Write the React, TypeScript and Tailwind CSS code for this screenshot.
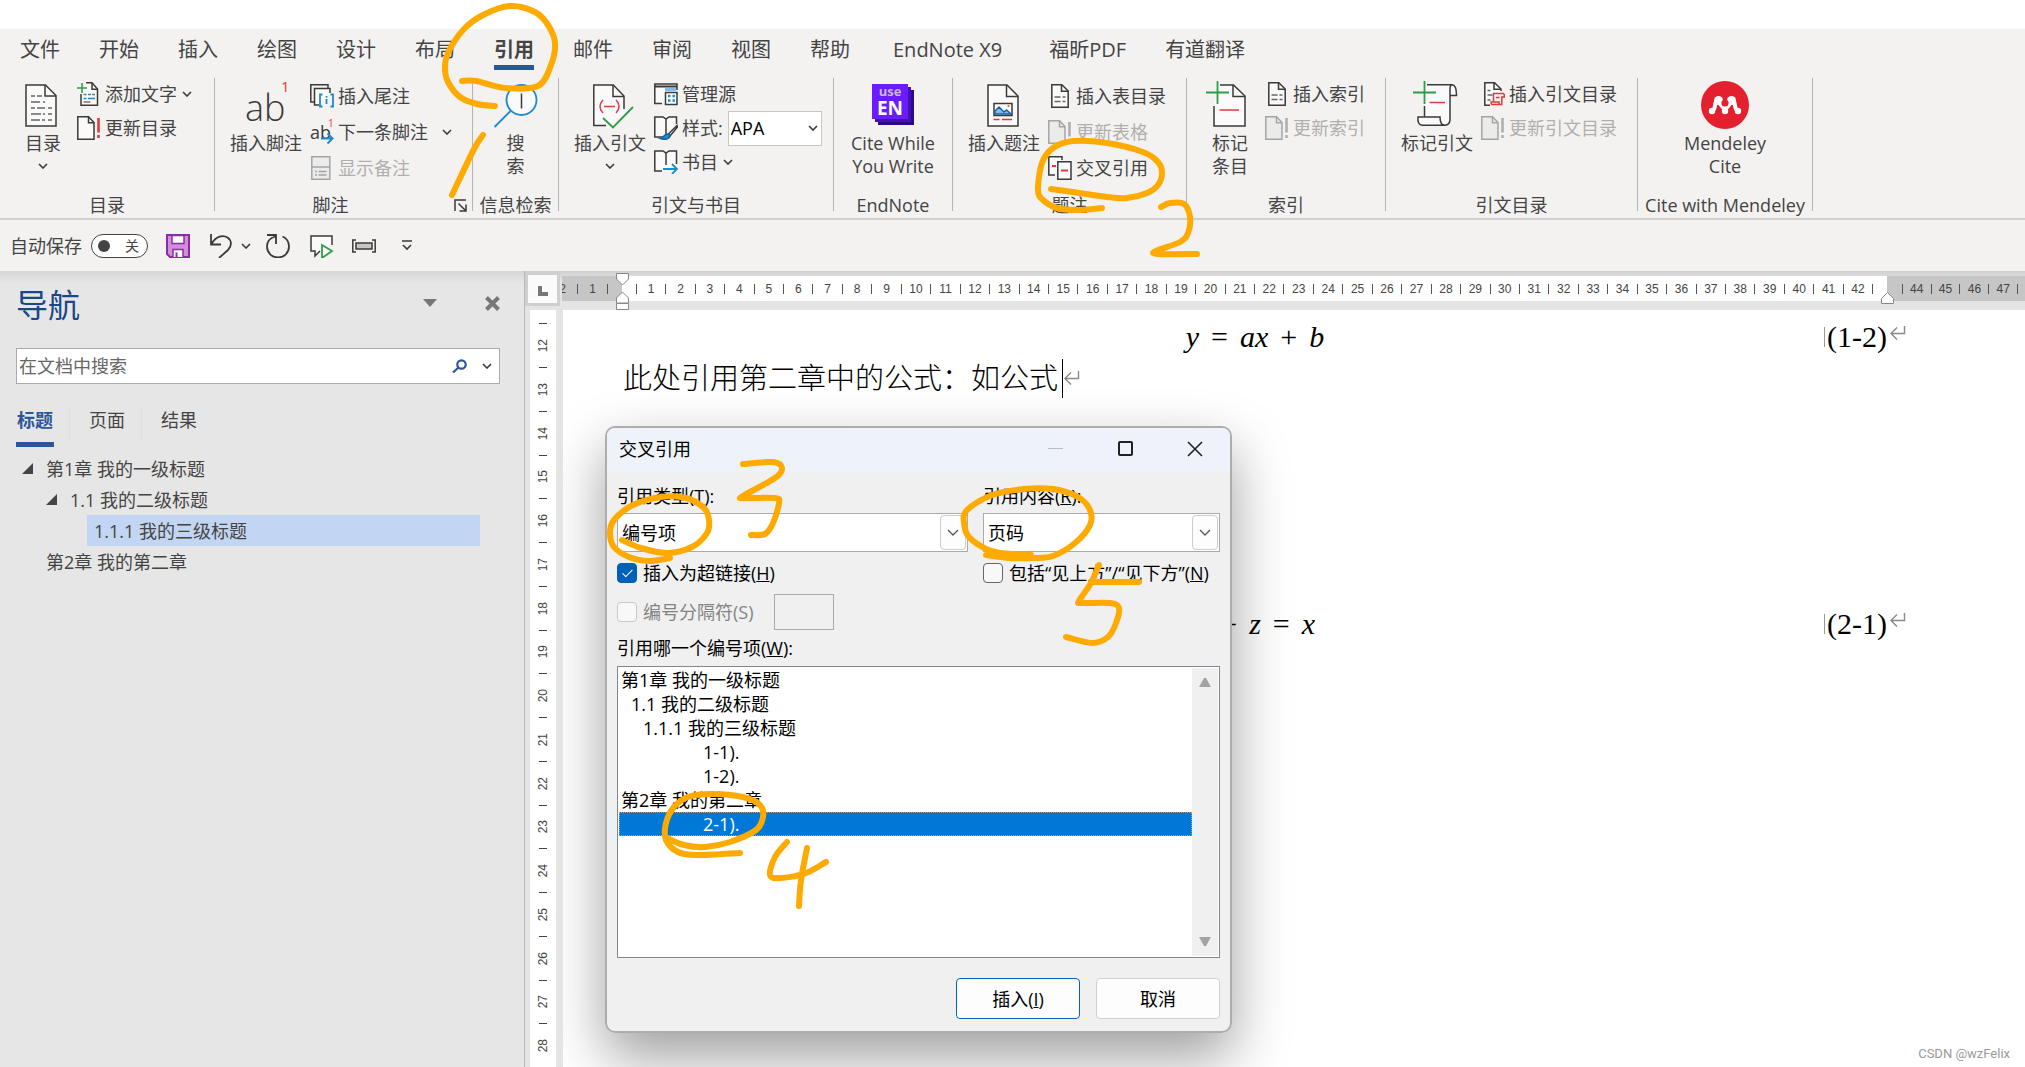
import { useState } from 'react';
import type { ReactNode } from 'react';

type Point = [number, number];

const tabs = ['文件', '开始', '插入', '绘图', '设计', '布局', '引用', '邮件', '审阅', '视图', '帮助', 'EndNote X9', '福昕PDF', '有道翻译'];

const numberedItems = [
  { text: '第1章 我的一级标题', indent: 'pl-0.5' },
  { text: '1.1 我的二级标题', indent: 'pl-3' },
  { text: '1.1.1 我的三级标题', indent: 'pl-6' },
  { text: '1-1).', indent: 'pl-[84px]' },
  { text: '1-2).', indent: 'pl-[84px]' },
  { text: '第2章 我的第二章', indent: 'pl-0.5' },
  { text: '2-1).', indent: 'pl-[84px]' },
];

// Handwritten marks: every stroke is a list of points joined by a smooth curve
const strokes: Point[][] = [
  // 1
  [[462, 81], [476, 81], [505, 88], [538, 86], [551, 65], [555, 43], [548, 25], [535, 12], [510, 6], [483, 15], [463, 30], [448, 53], [445, 68], [448, 82], [460, 97], [477, 104], [495, 106]],
  [[483, 135], [474, 149], [452, 195]],
  // 2
  [[1051, 189], [1073, 192], [1107, 197], [1127, 198], [1147, 193], [1158, 185], [1162, 173], [1158, 162], [1143, 152], [1107, 143], [1073, 141], [1053, 148], [1042, 163], [1038, 190], [1043, 200], [1057, 208], [1077, 210], [1102, 208]],
  [[1161, 207], [1170, 203], [1184, 204], [1190, 217], [1188, 233], [1180, 242], [1156, 251], [1158, 254], [1197, 254]],
  // 3
  [[622, 540], [641, 548], [667, 553], [692, 547], [707, 533], [709, 520], [704, 508], [686, 498], [661, 497], [633, 505], [614, 520], [610, 533], [614, 547], [629, 557], [649, 561], [670, 558]],
  [[743, 464], [773, 462], [782, 468], [775, 478], [743, 496], [745, 498], [775, 498], [779, 503], [773, 523], [765, 534], [751, 535]],
  // 4
  [[667, 838], [684, 845], [705, 847], [730, 842], [756, 830], [763, 817], [760, 805], [743, 797], [712, 794], [688, 797], [674, 807], [666, 823], [666, 840], [678, 852], [697, 855], [740, 853]],
  [[787, 842], [775, 857], [770, 875], [781, 878], [806, 873], [826, 862]],
  [[807, 848], [801, 880], [799, 906]],
  // 5
  [[986, 555], [1008, 558], [1033, 558], [1053, 556], [1075, 543], [1090, 525], [1090, 510], [1078, 497], [1053, 489], [1024, 489], [992, 495], [967, 510], [964, 523], [969, 537], [986, 549], [1000, 553], [1031, 555]],
  [[1099, 565], [1091, 583], [1079, 601], [1082, 603], [1110, 603], [1119, 608], [1116, 623], [1108, 637], [1092, 643], [1066, 637]],
  [[1091, 582], [1139, 582]],
];

const smooth = (pts: Point[]): string => {
  let d = `M${pts[0][0]} ${pts[0][1]}`;
  for (let i = 0; i < pts.length - 1; i++) {
    const p0 = pts[i - 1] || pts[i];
    const p1 = pts[i];
    const p2 = pts[i + 1];
    const p3 = pts[i + 2] || p2;
    d += ` C${p1[0] + (p2[0] - p0[0]) / 6} ${p1[1] + (p2[1] - p0[1]) / 6} ${p2[0] - (p3[0] - p1[0]) / 6} ${p2[1] - (p3[1] - p1[1]) / 6} ${p2[0]} ${p2[1]}`;
  }
  return d;
};

function Icon({ size = 24, children }: { size?: number; children: ReactNode }) {
  return (
    <svg width={size} height={size} viewBox={`0 0 ${size} ${size}`} fill="none" stroke="#3b3a39" strokeWidth={1.5} className="shrink-0" aria-hidden="true">
      {children}
    </svg>
  );
}

function Chevron() {
  return (
    <svg width="10" height="6" viewBox="0 0 10 6" fill="none" stroke="#3b3a39" strokeWidth="1.6" className="shrink-0" aria-hidden="true">
      <path d="M1 1l4 4 4-4" />
    </svg>
  );
}

function ReturnMark() {
  return (
    <svg width="17" height="15" viewBox="0 0 17 15" fill="none" stroke="#8a8a8a" strokeWidth="1.4" aria-hidden="true">
      <path d="M15.5 0v7.5H2M8 1.500 2 7.500l6 6" />
    </svg>
  );
}

/* ---------- ribbon pieces ---------- */

function Group({ label, width, launcher, children }: { label: string; width: string; launcher?: boolean; children: ReactNode }) {
  return (
    <section aria-label={label} className={`flex h-[133px] shrink-0 flex-col border-r border-[#b3b3b3] ${width}`}>
      <div className="-mt-px flex flex-1 items-start">{children}</div>
      <div className="flex h-3 items-center">
        <span className="flex-1 text-center leading-3 whitespace-nowrap">{label}</span>
        {launcher && (
          <button aria-label="脚注和尾注" className="mr-[5px] ml-2">
            <svg width="13" height="13" viewBox="0 0 13 13" fill="none" stroke="#3b3a39" strokeWidth="1.5">
              <path d="M1 12V1h11M4.500 4.500l7 7M12 5.500V12H5.500" />
            </svg>
          </button>
        )}
      </div>
    </section>
  );
}

function BigButton({ icon, lines, menu, className = '' }: { icon: ReactNode; lines: string[]; menu?: boolean; className?: string }) {
  return (
    <button className={`flex flex-col items-center pt-1 ${className}`}>
      {icon}
      <span className="mt-[3px] flex flex-col leading-[23px] whitespace-nowrap">
        {lines.map((line) => (
          <span key={line}>{line}</span>
        ))}
      </span>
      {menu && <span className="mt-2"><Chevron /></span>}
    </button>
  );
}

function SmallButton({ icon, label, menu, disabled, tall }: { icon: ReactNode; label: string; menu?: string; disabled?: boolean; tall?: boolean }) {
  return (
    <button disabled={disabled} className={`flex items-center gap-1 whitespace-nowrap ${tall ? 'h-9' : 'h-[34px]'} ${disabled ? 'text-[#b1afad]' : ''}`}>
      {icon}
      {label}
      {menu && <span className={menu}><Chevron /></span>}
    </button>
  );
}

const updateIcon = (disabled?: boolean) => (
  <Icon>
    <path d="M.8.8h10.700L17 6.500v16.700H.8z" fill={disabled ? '#ebebeb' : '#fafafa'} stroke={disabled ? '#a5a5a5' : '#3b3a39'} />
    <path d="M11.500.8v6H17" stroke={disabled ? '#a5a5a5' : '#3b3a39'} />
    <path d="M21.500 2v14.500M21.500 19v3" stroke={disabled ? '#b1afad' : '#e8373b'} strokeWidth="2.600" />
  </Icon>
);

const listIcon = (
  <Icon>
    <path d="M3.800.8h10L20.200 7v16.200H3.800z" fill="#fafafa" />
    <path d="M13.500.8v6.500h6.700" />
    <path d="M6.500 13h6M14.500 13h3M6.500 17.500h6M14.500 17.500h3" stroke="#666" />
  </Icon>
);

function Ribbon() {
  return (
    <div className="flex overflow-hidden border-b-2 border-[#d0d0d0] pt-1 pb-[7px] text-lg">
      <Group label="目录" width="w-[215px]">
        <BigButton
          className="ml-[19px] w-12"
          menu
          lines={['目录']}
          icon={
            <Icon size={48}>
              <path d="M7 4h19.500l10.500 10.500V45H7z" fill="#fafafa" />
              <path d="M26 4v11h11" />
              <path d="M12 15h4M18 15h5M12 21h9M24 21h2M12 27h4M18 27h8M29 27h4M12 33h10M24 33h2M29 33h4M12 39h9M23 39h3M29 39h4" stroke="#666" />
            </Icon>
          }
        />
        <div className="ml-2.5 flex flex-col">
          <SmallButton
            label="添加文字"
            menu="ml-px"
            icon={
              <Icon>
                <path d="M9 .8h6L20.500 7v16.200H4V12" fill="#fafafa" />
                <path d="M15 .8v6.500h5.500" />
                <path d="M0 6h10M5 1v10" stroke="#2e9e49" />
                <path d="M6.500 12.500h3M15 12.500h3M6.500 20h7" stroke="#777" />
                <path d="M6.500 16.500h3M11 16.500h7M11 12.500h3" stroke="#1e8bcd" />
              </Icon>
            }
          />
          <SmallButton label="更新目录" icon={updateIcon()} />
        </div>
      </Group>

      <Group label="脚注" width="w-[258px]" launcher>
        <BigButton
          className="ml-[15px] w-[72px]"
          lines={['插入脚注']}
          icon={
            <svg width="48" height="48" viewBox="0 0 48 48" className="overflow-visible" aria-hidden="true">
              <text x="3" y="40" fontSize="36" fontWeight="300" fill="#3b3a39" className="font-['Open_Sans']">ab</text>
              <text x="39" y="11" fontSize="15" fill="#e8373b" className="font-['Open_Sans']">1</text>
            </svg>
          }
        />
        <div className="ml-2 flex flex-col pt-px">
          <SmallButton
            tall
            label="插入尾注"
            icon={
              <Icon>
                <path d="M5 18H.8V.8H18V4" />
                <path d="M9 21H4.500V4.500H20V9" fill="#fafafa" />
                <path d="M12.500 10.500h-2.500v12h2.500M20.500 10.500H23v12h-2.500M16.500 15v5M16.500 12v1.500" stroke="#1e8bcd" strokeWidth="1.800" />
              </Icon>
            }
          />
          <SmallButton
            tall
            label="下一条脚注"
            menu="ml-2.5"
            icon={
              <svg width="24" height="24" viewBox="0 0 24 24" fill="none" className="overflow-visible" aria-hidden="true">
                <text x="0" y="19" fontSize="18" fill="#3b3a39" className="font-['Open_Sans']">ab</text>
                <text x="18" y="7" fontSize="10" fill="#e8373b" className="font-['Open_Sans']">1</text>
                <path d="M11 18.500h11M17.500 13.500l5 5-5 5" stroke="#1e8bcd" strokeWidth="2" />
              </svg>
            }
          />
          <SmallButton
            tall
            disabled
            label="显示备注"
            icon={
              <Icon>
                <path d="M1.800.8h18v22.400h-18z" fill="#ebebeb" stroke="#a5a5a5" />
                <path d="M2 11h18M5 15.500h2M8.500 15.500h8M5 19h2M8.500 19h8" stroke="#a5a5a5" />
              </Icon>
            }
          />
        </div>
      </Group>

      <Group label="信息检索" width="w-[86px]">
        <BigButton
          className="w-full"
          lines={['搜', '索']}
          icon={
            <Icon size={48}>
              <circle cx="29.500" cy="19" r="15" fill="#fafafa" stroke="#1e8bcd" strokeWidth="1.800" />
              <path d="M18.500 30L2.500 46" stroke="#1e8bcd" strokeWidth="1.800" />
              <path d="M29.500 12.500v15" />
            </Icon>
          }
        />
      </Group>

      <Group label="引文与书目" width="w-[275px]">
        <BigButton
          className="ml-[15px] w-[72px]"
          menu
          lines={['插入引文']}
          icon={
            <Icon size={48}>
              <path d="M20 44.500H7.800V4h19.500L38 15v17l-10 9" fill="#fafafa" stroke="none" />
              <path d="M20 44.500H7.800V4h19.500L38 15v13" />
              <path d="M27 4v11.500h11" />
              <path d="M17 19c-4 4-4 9 0 13M30 19c4 4 4 9 0 13M18 25.500h11" stroke="#e8373b" />
              <path d="M17 37l10 9.500L47 26" stroke="#2e9e49" strokeWidth="1.800" />
            </Icon>
          }
        />
        <div className="ml-2 flex flex-col">
          <SmallButton
            label="管理源"
            icon={
              <Icon>
                <path d="M8 21.500H.8V2H23v6" fill="#fafafa" />
                <path d="M1 4.500h22" strokeWidth="2" />
                <path d="M11 6h11v3H11z" fill="#83bcec" stroke="none" />
                <path d="M11.500 10.500H23v12H11.500z" fill="#fff" />
                <path d="M14 14h2.500M18.500 14H21M14 18.500h2.500M18.500 18.500H21" stroke="#1e8bcd" strokeWidth="2.500" />
              </Icon>
            }
          />
          <div className="flex h-[34px] items-center gap-1">
            <Icon>
              <path d="M9 21H.8V1H9l3 2 3-2h7.500v7M12 3v15" fill="#fafafa" />
              <path d="M23 9.500L14.500 18l1.500 2 7.500-9z" fill="#fafafa" />
              <path d="M14 18c-5 0-4 4-7.500 4.500 5 2 9.500 0 9.500-3z" fill="#1e8bcd" stroke="#1664a5" />
            </Icon>
            <label htmlFor="cite-style" className="whitespace-nowrap">样式:</label>
            <div className="relative ml-px">
              <select id="cite-style" className="h-[35px] w-[94px] appearance-none border border-[#c8c6c4] bg-white pl-0.5 text-black">
                <option>APA</option>
              </select>
              <span className="pointer-events-none absolute top-3.5 right-1"><Chevron /></span>
            </div>
          </div>
          <SmallButton
            label="书目"
            menu="ml-px"
            icon={
              <Icon>
                <path d="M8 21H.8V1H9l3 2 3-2h7.500v13M12 3v12" fill="#fafafa" />
                <path d="M9 19h14M18 14l5 5-5 5" stroke="#1e8bcd" strokeWidth="1.800" />
              </Icon>
            }
          />
        </div>
      </Group>

      <Group label="EndNote" width="w-[119px]">
        <BigButton
          className="w-full"
          lines={['Cite While', 'You Write']}
          icon={
            <svg width="48" height="48" viewBox="0 0 48 48" className="overflow-visible" aria-hidden="true">
              <path d="M9 9h36v35H9z" fill="#2e0a80" />
              <path d="M6 6h36v35H6z" fill="#4411b5" />
              <path d="M3 3h36v35H3z" fill="#6a1bff" />
              <text x="21" y="15" textAnchor="middle" fontSize="13" fontWeight="700" fill="#c9b9ea" className="font-['Open_Sans']">use</text>
              <text x="21" y="34" textAnchor="middle" fontSize="19" fontWeight="700" fill="#fff" className="font-['Open_Sans']">EN</text>
            </svg>
          }
        />
      </Group>

      <Group label="题注" width="w-[234px]">
        <BigButton
          className="ml-[15px] w-[72px]"
          lines={['插入题注']}
          icon={
            <Icon size={48}>
              <path d="M8 4h19l11 11v30H8z" fill="#fafafa" />
              <path d="M26.500 4v11.500H38" />
              <path d="M14 22.500h18v12H14z" fill="#fff" />
              <path d="M15 33v-3l4-4 5 5 2.500-2 4.500 4z" fill="#83bcec" stroke="#1664a5" />
              <path d="M27.500 25h2" stroke="#e07b1a" strokeWidth="2" />
              <path d="M13.500 38.500h6M22 38.500h10" stroke="#e8373b" />
            </Icon>
          }
        />
        <div className="ml-2 flex flex-col pt-px">
          <SmallButton tall label="插入表目录" icon={listIcon} />
          <SmallButton tall disabled label="更新表格" icon={updateIcon(true)} />
          <SmallButton
            tall
            label="交叉引用"
            icon={
              <Icon>
                <path d="M7 19H.8V.8H14V4" fill="#fafafa" />
                <path d="M9.800 5.800H23v17.400H9.800z" fill="#fafafa" />
                <path d="M4 10h4M13 14.500h7" stroke="#e8373b" strokeWidth="1.800" />
              </Icon>
            }
          />
        </div>
      </Group>

      <Group label="索引" width="w-[199px]">
        <BigButton
          className="ml-[19px] w-12"
          lines={['标记', '条目']}
          icon={
            <Icon size={48}>
              <path d="M14 4h14l11 11v30H8V18h6z" fill="#fafafa" stroke="none" />
              <path d="M14 4h13.500L39 15v30H8V25" />
              <path d="M27 4v11.500h12" />
              <path d="M0 11.500h23M11.500 0v23" stroke="#2e9e49" strokeWidth="1.800" />
              <path d="M13.500 29H33" stroke="#e8373b" />
            </Icon>
          }
        />
        <div className="ml-[11px] flex flex-col">
          <SmallButton label="插入索引" icon={listIcon} />
          <SmallButton disabled label="更新索引" icon={updateIcon(true)} />
        </div>
      </Group>

      <Group label="引文目录" width="w-[252px]">
        <BigButton
          className="ml-[15px] w-[72px]"
          lines={['标记引文']}
          icon={
            <Icon size={48}>
              <path d="M12 36V4h28c3 2 3 6 3 11h-6v24c0 4-3 6-6 6H9c-3 0-4-4-4-9h7" fill="#fafafa" stroke="none" />
              <path d="M14 3.800h25c3.500 0 4.500 4 4.500 10.700H37V8c0-2.500 1-4.200 2.500-4.200M37 14v24c0 4.500-2.500 6.200-5 6.200s-5-1.700-5-8.200H5c-.5 5 1 8.200 4 8.200h23M11.500 25v11" />
              <path d="M0 11.500h23M11.500 0v23" stroke="#2e9e49" strokeWidth="1.800" />
              <path d="M16.500 21.500H32" stroke="#e8373b" />
            </Icon>
          }
        />
        <div className="ml-2 flex flex-col">
          <SmallButton
            label="插入引文目录"
            icon={
              <Icon>
                <path d="M9 23.200H3.800V.8h9.700L20 7v2" fill="#fafafa" />
                <path d="M13 .8v6.500h6.500" />
                <path d="M6.500 8.500h3M6.500 13h5M6.500 18h3" stroke="#666" />
                <path d="M12.500 20v-8.500h10c1 1 1 2 .8 3.500h-2.500v7.500h-10c-.8-.5-.8-1.500-.8-2.500h8v2M15 15.500h3.500" stroke="#e8373b" />
              </Icon>
            }
          />
          <SmallButton disabled label="更新引文目录" icon={updateIcon(true)} />
        </div>
      </Group>

      <Group label="Cite with Mendeley" width="w-[175px]">
        <BigButton
          className="w-full text-center"
          lines={['Mendeley', 'Cite']}
          icon={
            <svg width="48" height="48" viewBox="0 0 48 48" aria-hidden="true">
              <circle cx="24" cy="24" r="24" fill="#e5202e" />
              <path d="M11.500 29.500c4-2 1-7 4.500-9.500M36.500 29.500c-4-2-1-7-4.500-9.500M17 20c3 3 4 6.500 7 8 3-1.500 4-5 7-8" fill="none" stroke="#fff" strokeWidth="4" />
              <circle cx="17.500" cy="19.500" r="4.500" fill="#fff" />
              <circle cx="30.500" cy="19.500" r="4.500" fill="#fff" />
              <circle cx="11" cy="30" r="3.200" fill="#fff" />
              <circle cx="24" cy="30" r="3.200" fill="#fff" />
              <circle cx="37" cy="30" r="3.200" fill="#fff" />
              <circle cx="24" cy="22" r="3.600" fill="#e5202e" />
            </svg>
          }
        />
      </Group>
    </div>
  );
}

function QuickAccess() {
  return (
    <div className="flex h-[51px] items-center pl-2.5 text-lg">
      <span id="autosave">自动保存</span>
      <button role="switch" aria-checked="false" aria-labelledby="autosave" className="ml-[9px] flex h-6 w-[57px] items-center justify-between rounded-full border border-[#444] bg-white pr-2 pl-1.5 text-sm">
        <span className="size-3 rounded-full bg-[#444]" />
        关
      </button>
      <button aria-label="保存" className="ml-[18px]">
        <Icon>
          <path d="M1 1h22v22H4l-3-3z" fill="#d08fd6" stroke="#8a2da5" strokeWidth="2" />
          <path d="M6 1.500h12v8H6z" fill="#fafafa" stroke="#8a2da5" />
          <path d="M7 23v-7.500h10V23" fill="#fafafa" stroke="#8a2da5" />
          <path d="M10.500 18.500V23" stroke="#8a2da5" strokeWidth="2" />
        </Icon>
      </button>
      <button aria-label="撤消" className="ml-5 flex items-center gap-[7px]">
        <Icon>
          <path d="M1 0v10.500h10M1.500 10C6 2 13 .5 17.500 3.500 22 6.500 22 12 18 16l-9 8" strokeWidth="1.800" />
        </Icon>
        <Chevron />
      </button>
      <button aria-label="重复" className="ml-[15px]">
        <Icon>
          <path d="M1 1h9v9M9.500 2.500C4 4 1 8 1 12.500a11 11 0 0 0 22 0c0-4-2-8-6.500-10" strokeWidth="1.800" />
        </Icon>
      </button>
      <button aria-label="朗读" className="ml-5">
        <Icon>
          <path d="M10 17l-5 5v-5H1V2h21v9" fill="#fafafa" />
          <path d="M12 11l10 6-10 7z" fill="#fafafa" stroke="#2e9e49" strokeWidth="1.800" />
        </Icon>
      </button>
      <button aria-label="域" className="ml-[18px]">
        <Icon>
          <path d="M4 6H.8v12H4M20 6h3.200v12H20" />
          <path d="M4 9h16v6H4z" fill="#c8c6c4" />
        </Icon>
      </button>
      <button aria-label="自定义快速访问工具栏" className="ml-[25px]">
        <svg width="12" height="11" viewBox="0 0 12 11" fill="none" stroke="#3b3a39" strokeWidth="1.600">
          <path d="M1 1h10M2 5l4 4 4-4" />
        </svg>
      </button>
    </div>
  );
}

function NavigationPane() {
  const rowClass = 'flex h-[31px] items-center whitespace-nowrap';
  const triangle = (
    <svg width="11" height="11" viewBox="0 0 11 11" className="mr-[13px]" aria-hidden="true">
      <path d="M11 0v11H0z" fill="#444" />
    </svg>
  );
  return (
    <aside className="flex w-[525px] shrink-0 flex-col border-r border-[#b8b8b8] bg-[#e6e6e6] bg-linear-to-b from-[#d6d6d6] to-[#e6e6e6] to-[12px] pl-4 text-lg text-[#444]">
      <div className="mt-2.5 flex h-12 items-center">
        <h2 className="text-[32px] text-[#19478a]">导航</h2>
        <button aria-label="任务窗格选项" className="ml-auto pb-1">
          <svg width="14" height="8" viewBox="0 0 14 8"><path d="M0 0h14L7 8z" fill="#777" /></svg>
        </button>
        <button aria-label="关闭" className="mr-6 ml-12 pb-1">
          <svg width="15" height="15" viewBox="0 0 15 15" stroke="#777" strokeWidth="4"><path d="M1.500 1.500l12 12M13.500 1.500l-12 12" /></svg>
        </button>
      </div>
      <div className="mt-[19px] mr-6 flex h-9 items-center border border-[#ababab] bg-white pr-[7px]">
        <input aria-label="在文档中搜索" placeholder="在文档中搜索" className="h-full min-w-0 flex-1 pl-0.5 outline-none placeholder:text-[#666]" />
        <button aria-label="搜索">
          <svg width="16" height="14" viewBox="0 0 16 14" fill="none" stroke="#2b579a" strokeWidth="2.200"><circle cx="9.500" cy="5.500" r="4.200" /><path d="M6.500 8.500L1 13.500" /></svg>
        </button>
        <button aria-label="搜索选项" className="ml-3.5"><Chevron /></button>
      </div>
      <div role="tablist" className="mt-[21px] flex h-[42px] items-start">
        <button role="tab" aria-selected="true" className="h-[42px] border-b-[5px] border-[#2b579a] px-px pb-[7px] font-bold text-[#2b579a]">标题</button>
        <span className="mt-1 ml-[15px] h-8 w-px bg-[#dedede]" />
        <button role="tab" aria-selected="false" className="ml-[19px] h-[37px] pb-[7px]">页面</button>
        <span className="mt-1 ml-4 h-8 w-px bg-[#dedede]" />
        <button role="tab" aria-selected="false" className="ml-[19px] h-[37px] pb-[7px]">结果</button>
      </div>
      <ul role="tree" className="mt-1.5 mr-11">
        <li role="treeitem" className={`${rowClass} pl-1.5`}>{triangle}第1章 我的一级标题</li>
        <li role="treeitem" className={`${rowClass} pl-[30px]`}>{triangle}1.1 我的二级标题</li>
        <li role="treeitem" aria-selected="true" className={`${rowClass} ml-[71px] bg-[#c2d5f2] pl-[7px]`}>1.1.1 我的三级标题</li>
        <li role="treeitem" className={`${rowClass} pl-[30px]`}>第2章 我的第二章</li>
      </ul>
    </aside>
  );
}

/* ---------- rulers ---------- */

function HorizontalMarks({ marks }: { marks: (number | string)[] }) {
  return (
    <>
      {marks.map((mark, i) => (
        <span key={i} className="flex min-w-0 flex-1 justify-center">
          {mark === '|' ? <span className="h-2.5 w-px bg-[#555]" /> : mark}
        </span>
      ))}
    </>
  );
}

function HorizontalRuler() {
  const marks: (number | string)[] = ['|'];
  for (let n = 1; n <= 42; n++) marks.push(n, '|');
  return (
    <div className="mt-1 ml-0.5 flex h-[25px] flex-1 items-stretch text-xs leading-none text-[#444] font-['Liberation_Sans',sans-serif]">
      <div className="flex w-[60px] items-center justify-end overflow-hidden bg-[#c6c6c6] pr-[7px]">
        {['2', '|', '1', '|'].map((mark, i) => (
          <span key={i} className="flex w-[15px] shrink-0 justify-center">
            {mark === '|' ? <span className="h-2.5 w-px bg-[#555]" /> : mark}
          </span>
        ))}
      </div>
      <div className="relative flex min-w-0 flex-1 items-center bg-white px-[7px]">
        <HorizontalMarks marks={marks} />
        <svg width="13" height="38" viewBox="0 0 13 38" fill="#fff" stroke="#888" className="absolute -top-[3px] -left-1.5" aria-hidden="true">
          <path d="M.5.500h12V6l-6 6-6-6zM.5 30v-5l6-6 6 6v5zM.5 30.500h12v6H.5z" />
        </svg>
        <svg width="13" height="12" viewBox="0 0 13 12" fill="#fff" stroke="#888" className="absolute top-4 -right-[7px] z-10" aria-hidden="true">
          <path d="M.5 11.500v-5l6-6 6 6v5z" />
        </svg>
      </div>
      <div className="flex w-[138px] items-center bg-[#c6c6c6] pl-2">
        <HorizontalMarks marks={['|', 44, '|', 45, '|', 46, '|', 47, '|']} />
      </div>
    </div>
  );
}

function VerticalRuler() {
  const marks: (number | string)[] = [];
  for (let n = 12; n <= 28; n++) marks.push('|', n);
  return (
    <div className="mr-[7px] ml-[5px] flex w-[26px] flex-col items-center bg-white pt-[3px] pb-2.5 text-xs leading-none text-[#444] font-['Liberation_Sans',sans-serif]">
      {marks.map((mark, i) => (
        <span key={i} className="flex min-h-0 flex-1 items-center">
          {mark === '|' ? <span className="h-px w-2 bg-[#444]" /> : <span className="rotate-180 [writing-mode:vertical-rl]">{mark}</span>}
        </span>
      ))}
    </div>
  );
}

/* ---------- document ---------- */

function Equation({ terms, number }: { terms: string[]; number: string }) {
  return (
    <div className="grid h-10 grid-cols-[1fr_auto_1fr] items-center text-[30px] text-black font-['Liberation_Serif',serif]">
      <span />
      <span className="flex gap-3">
        {terms.map((term, i) => (
          <span key={i} className={/[a-z]/.test(term) ? 'italic' : ''}>{term}</span>
        ))}
      </span>
      <span className="relative flex items-center justify-self-end">
        <span className="mr-0.5 h-5 w-px bg-[#999]" />
        {number}
        <span className="absolute top-3 left-full pl-0.5"><ReturnMark /></span>
      </span>
    </div>
  );
}

function ComboBox({ id, value }: { id: string; value: string }) {
  return (
    <div className="relative mt-[5px]">
      <select id={id} className="h-[39px] w-full appearance-none border border-[#aaa] bg-white pl-1">
        <option>{value}</option>
      </select>
      <span className="pointer-events-none absolute top-0.5 right-0.5 flex h-[35px] w-[26px] items-center justify-center rounded-sm border border-[#ccc] bg-[#fdfdfd]">
        <svg width="12" height="7" viewBox="0 0 12 7" fill="none" stroke="#555" strokeWidth="1.300"><path d="M1 1l5 5 5-5" /></svg>
      </span>
    </div>
  );
}

const boxClass =
  "flex size-5 shrink-0 appearance-none items-center justify-center rounded border border-[#666] bg-[#f8f8f8] checked:border-[#005fb8] checked:bg-[#005fb8] checked:after:mb-0.5 checked:after:h-2.5 checked:after:w-[5px] checked:after:rotate-45 checked:after:border-r checked:after:border-b checked:after:border-white checked:after:content-[''] disabled:border-[#c8c8c8]";

function CrossReferenceDialog() {
  const [selected, setSelected] = useState(6);

  return (
    <div role="dialog" aria-labelledby="dialog-title" className="absolute top-[116px] left-[42px] flex w-[627px] flex-col overflow-hidden rounded-[10px] border-2 border-[#adadad] bg-[#f0f0f0] text-lg leading-6 text-black">
      <header className="flex h-11 items-center bg-linear-to-r from-[#edf3f8] to-[#eff2fb] pb-[3px] pl-3">
        <h1 id="dialog-title">交叉引用</h1>
        <button aria-label="最小化" disabled className="ml-auto flex w-[70px] justify-center"><span className="h-px w-[15px] bg-[#bbb]" /></button>
        <button aria-label="最大化" className="flex w-[70px] justify-center"><span className="size-[15px] rounded-xs border-2 border-[#222]" /></button>
        <button aria-label="关闭" className="flex w-[70px] justify-center">
          <svg width="16" height="16" viewBox="0 0 16 16" stroke="#222" strokeWidth="1.600"><path d="M1 1l14 14M15 1L1 15" /></svg>
        </button>
      </header>

      <div className="flex flex-col pt-3 pr-2.5 pb-3 pl-2.5">
        <div className="grid grid-cols-[351px_1fr] gap-x-[15px]">
          <div>
            <label htmlFor="ref-type" className="block">引用类型(<u>T</u>):</label>
            <ComboBox id="ref-type" value="编号项" />
          </div>
          <div>
            <label htmlFor="ref-content" className="block">引用内容(<u>R</u>):</label>
            <ComboBox id="ref-content" value="页码" />
          </div>
          <label className="mt-[9px] flex items-center gap-1.5 whitespace-nowrap">
            <input type="checkbox" defaultChecked className={boxClass} />
            <span>插入为超链接(<u>H</u>)</span>
          </label>
          <label className="mt-[9px] flex items-center gap-1.5 whitespace-nowrap">
            <input type="checkbox" className={boxClass} />
            <span>包括“见上方”/“见下方”(<u>N</u>)</span>
          </label>
        </div>

        <div className="mt-[9px] flex items-center">
          <label className="flex items-center gap-1.5 text-[#838383]">
            <input type="checkbox" disabled className={boxClass} />
            编号分隔符(S)
          </label>
          <input aria-label="编号分隔符" disabled className="ml-5 h-9 w-[60px] border border-[#aaa] bg-[#f0f0f0]" />
        </div>

        <div id="list-label" className="mt-1.5">引用哪一个编号项(<u>W</u>):</div>
        <div className="mt-1.5 flex h-[292px] border border-[#828790] bg-white p-px">
          <ul role="listbox" aria-labelledby="list-label" className="flex-1">
            {numberedItems.map((item, i) => (
              <li
                key={i}
                role="option"
                aria-selected={i === selected}
                onClick={() => setSelected(i)}
                className={`${item.indent} ${i === selected ? 'bg-[#0078d7] text-white outline outline-dotted -outline-offset-1 outline-[#ff8728]' : ''}`}
              >
                {item.text}
              </li>
            ))}
          </ul>
          <div className="flex w-[26px] flex-col items-center justify-between bg-[#f0f0f0] py-2.5">
            <svg width="12" height="9" viewBox="0 0 12 9"><path d="M5 0h2l5 9H0z" fill="#a3a3a3" /></svg>
            <svg width="12" height="9" viewBox="0 0 12 9"><path d="M5 9h2l5-9H0z" fill="#a3a3a3" /></svg>
          </div>
        </div>

        <div className="mt-5 flex justify-end gap-4">
          <button className="h-[41px] w-[124px] rounded border border-[#0067c0] bg-[#fdfdfd]">插入(<u>I</u>)</button>
          <button className="h-[41px] w-[124px] rounded border border-[#d0d0d0] bg-[#fdfdfd]">取消</button>
        </div>
      </div>
    </div>
  );
}

function Editor() {
  return (
    <main className="flex min-w-0 flex-1 flex-col bg-[#e4e4e4]">
      <div className="flex h-[39px] border-t border-[#d0d0d0] bg-linear-to-b from-[#d2d2d2] to-[#e4e4e4] to-[8px]">
        <div className="flex h-[34px] w-[35px] items-center justify-center border-[3px] border-[#cfcfcf] bg-[#fafafa]">
          <span className="mt-1 size-2.5 border-b-4 border-l-4 border-[#777]" />
        </div>
        <HorizontalRuler />
      </div>
      <div className="flex flex-1">
        <VerticalRuler />
        <div className="relative flex-1 overflow-hidden bg-white">
          <div className="pt-1 pr-[138px] pl-[60px]">
            <Equation terms={['y', '=', 'ax', '+', 'b']} number="(1-2)" />
            <p className="mt-1 flex h-10 items-center text-[29px] font-light whitespace-nowrap text-black">
              {'此处引用第二章中的公式\uff1a如公式'}
              <span className="ml-1 h-[39px] w-px bg-black" />
              <ReturnMark />
            </p>
            <div className="mt-[203px]">
              <Equation terms={['y', '+', 'z', '=', 'x']} number="(2-1)" />
            </div>
          </div>
          <div className="absolute top-[116px] left-[42px] h-[607px] w-[627px] rounded-[10px] shadow-[0_24px_56px_rgba(0,0,0,0.38)]" />
          <CrossReferenceDialog />
          <span className="absolute right-[15px] bottom-1 text-[13px] text-[#999] font-['Roboto',sans-serif]">CSDN @wzFelix</span>
        </div>
      </div>
    </main>
  );
}

export default function App() {
  return (
    <div className="relative flex min-h-screen flex-col overflow-hidden bg-[#f3f2f1] text-[#444] font-['Open_Sans','Noto_Sans_CJK_SC',sans-serif]">
      <div className="h-[29px] bg-white" />
      <nav className="flex h-[45px] items-start gap-[39px] pt-1.5 pl-5 text-xl leading-[30px] whitespace-nowrap">
        {tabs.map((tab) => (
          <button key={tab} className={tab === '引用' ? 'border-b-[5px] border-[#2b579a] font-bold' : tab === 'EndNote X9' ? 'pr-2 pl-1' : ''}>
            {tab}
          </button>
        ))}
      </nav>
      <Ribbon />
      <QuickAccess />
      <div className="flex flex-1">
        <NavigationPane />
        <Editor />
      </div>

      {/* handwritten step marks */}
      <svg className="pointer-events-none absolute inset-0 size-full" fill="none" stroke="#ffaa00" strokeWidth="6" strokeLinecap="round" strokeLinejoin="round" aria-hidden="true">
        {strokes.map((pts, i) => (
          <path key={i} d={smooth(pts)} />
        ))}
      </svg>
    </div>
  );
}
